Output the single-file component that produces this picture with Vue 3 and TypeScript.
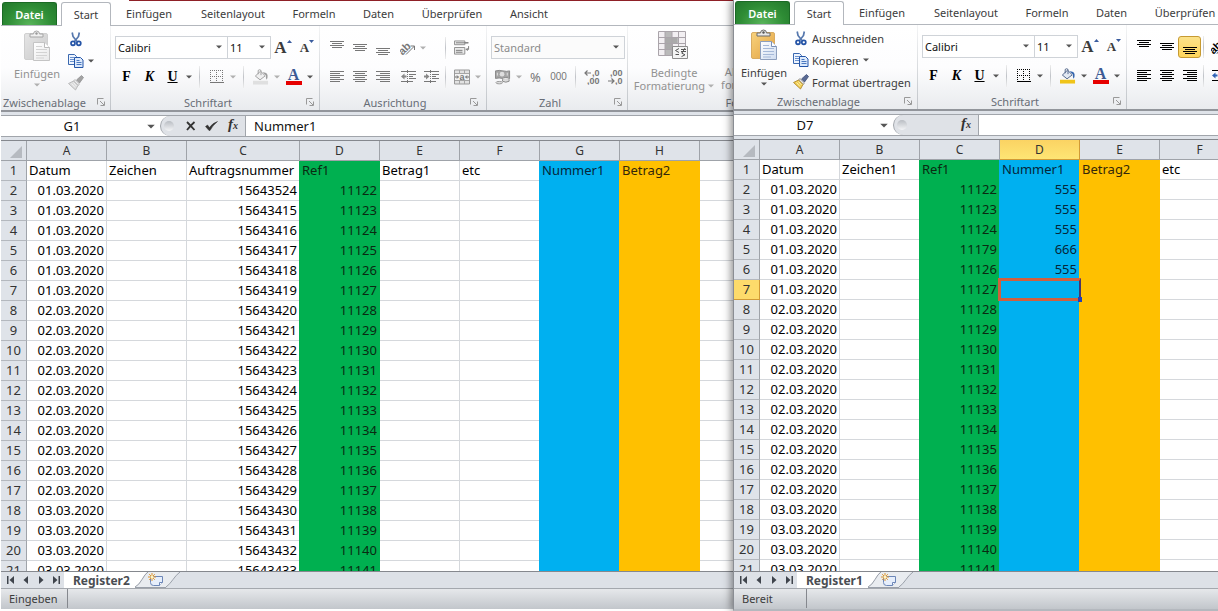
<script setup lang="ts">
interface Column {
  letter: string
  width: number
  title: string
  tone: string
}

interface Book {
  id: string
  active: boolean
  extraTabs: string[]
  cellRef: string
  formula: string
  sheet: string
  status: string
  selectedColumn: string
  selectedRow: number
  columns: Column[]
}

const col = (letter: string, title = '', tone = '', width = 80): Column => ({ letter, title, tone, width })

const books: Book[] = [
  {
    id: 'links',
    active: false,
    extraTabs: ['Ansicht'],
    cellRef: 'G1',
    formula: 'Nummer1',
    sheet: 'Register2',
    status: 'Eingeben',
    selectedColumn: '',
    selectedRow: 0,
    columns: [
      col('A', 'Datum'),
      col('B', 'Zeichen'),
      col('C', 'Auftragsnummer', '', 113),
      col('D', 'Ref1', 'green'),
      col('E', 'Betrag1'),
      col('F', 'etc'),
      col('G', 'Nummer1', 'blue'),
      col('H', 'Betrag2', 'gold'),
      col(''),
    ],
  },
  {
    id: 'rechts',
    active: true,
    extraTabs: [],
    cellRef: 'D7',
    formula: '',
    sheet: 'Register1',
    status: 'Bereit',
    selectedColumn: 'D',
    selectedRow: 7,
    columns: [
      col('A', 'Datum'),
      col('B', 'Zeichen1'),
      col('C', 'Ref1', 'green'),
      col('D', 'Nummer1', 'blue'),
      col('E', 'Betrag2', 'gold'),
      col('F', 'etc'),
    ],
  },
]

const tabs = [
  { name: 'Einfügen', size: 'w76' },
  { name: 'Seitenlayout', size: 'w92' },
  { name: 'Formeln', size: 'w70' },
  { name: 'Daten', size: 'w59' },
  { name: 'Überprüfen', size: 'w88' },
]

const rows = Array.from({ length: 20 }, (_, i) => i + 2)

function dateOf(row: number): string {
  const day = row <= 7 ? 1 : row <= 17 ? 2 : 3
  return `0${day}.03.2020`
}

function cellValue(book: Book, letter: string, row: number): string {
  if (letter === 'A') return dateOf(row)
  if (!book.active) {
    if (letter === 'C') return row === 2 ? '15643524' : String(15643412 + row)
    if (letter === 'D') return String(11120 + row)
    return ''
  }
  if (letter === 'C') return row === 5 ? '11179' : String(11120 + row)
  if (letter === 'D' && row <= 6) return row === 5 ? '666' : '555'
  return ''
}

const tableWidth = (book: Book): number => book.columns.reduce((sum, c) => sum + c.width, 26)
const aligns = ['i-top', 'i-middle', 'i-bottom']
const alignNames = ['Oben ausrichten', 'Zentriert ausrichten', 'Unten ausrichten']
const texts = ['i-left', 'i-center', 'i-right']
const textNames = ['Linksbündig', 'Zentriert', 'Rechtsbündig']
const navs = [
  { icon: 'i-first', name: 'Erstes Blatt' },
  { icon: 'i-prev', name: 'Vorheriges Blatt' },
  { icon: 'i-next', name: 'Nächstes Blatt' },
  { icon: 'i-last', name: 'Letztes Blatt' },
]
</script>

<template>
  <svg class="sprite" aria-hidden="true">
    <defs>
      <linearGradient id="g-board" x1="0" y1="0" x2="1" y2="1">
        <stop offset="0" stop-color="#f8d27c" /><stop offset="1" stop-color="#e2a243" />
      </linearGradient>
      <linearGradient id="g-page" x1="0" y1="0" x2="1" y2="1">
        <stop offset="0" stop-color="#ffffff" /><stop offset="1" stop-color="#cfdcf0" />
      </linearGradient>
    </defs>
    <symbol id="i-arrow" viewBox="0 0 6 4"><path d="M0 0.5h6L3 3.5z" fill="currentColor" /></symbol>
    <symbol id="i-paste" viewBox="0 0 28 32">
      <rect x="1.5" y="3.5" width="23" height="26" rx="1.5" fill="url(#g-board)" stroke="#d9ac62" />
      <path d="M7 7V4h3.500q0-3 3-3t3 3H20v3z" fill="#e8e8e8" stroke="#6b6b6b" />
      <circle cx="13.500" cy="3.500" r="1.200" fill="#555" />
      <path d="M10.500 12.500h11l5 5v13h-16z" fill="url(#g-page)" stroke="#8e9fbd" />
      <path d="M21.500 12.500v5h5" fill="#fff" stroke="#7a90b5" />
      <path d="M13 16.500h6M13 19.500h11M13 22.500h11M13 25.500h11M13 28h8" stroke="#a5b8d8" />
    </symbol>
    <symbol id="i-cut" viewBox="0 0 12 15">
      <path d="M2.200 0.500 3 4.500l4 5M9.300 0.500 8.500 4.500l-4 5" fill="none" stroke="#5577ad" stroke-width="1.700" />
      <circle cx="3" cy="11.300" r="2" fill="none" stroke="#2453a6" stroke-width="1.700" />
      <circle cx="8.800" cy="11.300" r="2" fill="none" stroke="#2453a6" stroke-width="1.700" />
    </symbol>
    <symbol id="i-copy" viewBox="0 0 16 14">
      <path d="M0.500 0.500h6l2 2v8h-8z" fill="#eef4fd" stroke="#3a68b0" />
      <path d="M2 3.500h4M2 5.500h4M2 7.500h4" stroke="#6b92cf" />
      <path d="M6.500 3.500h6l2.500 2.500v7.500H6.500z" fill="#dce9fb" stroke="#2455a8" />
      <path d="M8.500 6.500h3M8.500 8.500h5M8.500 10.500h5" stroke="#4c79c0" />
    </symbol>
    <symbol id="i-brush" viewBox="0 0 16 16">
      <path d="M13.500 0.500 15.500 2.500 11.500 8 8.500 5z" fill="#5a6a94" stroke="#3d4c75" stroke-width="0.800" />
      <path d="M7 4.500 11.500 9 10 10.500 5.500 6z" fill="#e5e5ea" stroke="#777" stroke-width="0.800" />
      <path d="M5.500 6 10 10.500 7.500 15 0.500 8.500z" fill="#efcb4f" stroke="#a88026" stroke-width="0.800" />
      <path d="M3.500 8.500 7 12.500M5.500 7.500 8.500 11" stroke="#fff3b4" />
    </symbol>
    <symbol id="i-launch" viewBox="0 0 8 8">
      <path d="M0.500 6.500v-6h6M3 3l4 4M7.500 3.500v4h-4" fill="none" stroke="currentColor" />
    </symbol>
    <symbol id="i-up" viewBox="0 0 5 3"><path d="M0 3h5L2.500 0z" fill="#3a5c9e" /></symbol>
    <symbol id="i-down" viewBox="0 0 5 3"><path d="M0 0h5L2.500 3z" fill="#3a5c9e" /></symbol>
    <symbol id="i-border" viewBox="0 0 14 14">
      <path d="M0 0.500h14M0 6.500h14M0.500 0v12M6.500 0v12M12.500 0v12" stroke="currentColor" stroke-dasharray="1 1" />
      <path d="M0 12.500h14" stroke="currentColor" stroke-width="1" />
    </symbol>
    <symbol id="i-fill" viewBox="0 0 17 16">
      <path d="M2.500 7 8 1.800l5 5L7.500 11z" fill="#e3e9f3" stroke="#4d6286" />
      <path d="M5.500 5V1.500q0-1.200 1.500-1.200t1.500 1.200V6" fill="none" stroke="#4d6286" />
      <path d="M10 3q5 0 5.500 3.500.3 2-1 4.500-1.200-2-.7-4.500z" fill="#3566ae" />
      <rect x="0" y="12" width="16" height="4" fill="var(--fill, #f0c419)" />
    </symbol>
    <symbol id="i-top" viewBox="0 0 14 14"><path d="M0 .5h14M2 2.500h10M0 4.500h14M2 6.500h10" stroke="currentColor" /></symbol>
    <symbol id="i-middle" viewBox="0 0 14 14"><path d="M0 3.500h14M2 5.500h10M0 7.500h14M2 9.500h10" stroke="currentColor" /></symbol>
    <symbol id="i-bottom" viewBox="0 0 14 14"><path d="M0 7.500h14M2 9.500h10M0 11.500h14M2 13.500h10" stroke="currentColor" /></symbol>
    <symbol id="i-left" viewBox="0 0 14 12"><path d="M0 .5h14M0 2.500h10M0 4.500h14M0 6.500h10M0 8.500h14M0 10.500h10" stroke="currentColor" /></symbol>
    <symbol id="i-center" viewBox="0 0 14 12"><path d="M0 .5h14M2 2.500h10M0 4.500h14M2 6.500h10M0 8.500h14M2 10.500h10" stroke="currentColor" /></symbol>
    <symbol id="i-right" viewBox="0 0 14 12"><path d="M0 .5h14M4 2.500h10M0 4.500h14M4 6.500h10M0 8.500h14M4 10.500h10" stroke="currentColor" /></symbol>
    <symbol id="i-outdent" viewBox="0 0 16 14">
      <path d="M0 1.500h15M8 4.500h7M8 6.500h4M8 8.500h7M0 11.500h12" stroke="currentColor" />
      <path d="M6.500 0v14" stroke="currentColor" stroke-dasharray="1 1" />
      <path d="M0 6.500 3.500 3.500v2h2v2h-2v2z" fill="var(--accent)" />
    </symbol>
    <symbol id="i-indent" viewBox="0 0 16 14">
      <path d="M0 1.500h15M8 4.500h7M8 6.500h4M8 8.500h7M0 11.500h12" stroke="currentColor" />
      <path d="M6.500 0v14" stroke="currentColor" stroke-dasharray="1 1" />
      <path d="M5.500 6.500 2 3.500v2H0v2h2v2z" fill="var(--accent)" />
    </symbol>
    <symbol id="i-wrap" viewBox="0 0 17 16">
      <path d="M.5.500h11v4H.5zM.5 7.500h11v7H.5z" fill="#ececec" stroke="#8d8d8d" />
      <path d="M2 2.500h13M2 10.500h7M2 12.500h7" stroke="#777" />
      <path d="M15.500 2.500h-4M15.500 6v3.500h-2.500M14.500 8 13 9.500l1.500 1.500" fill="none" stroke="#777" />
    </symbol>
    <symbol id="i-money" viewBox="0 0 17 16">
      <path d="M.5 1.500q4-1 8 0t7 0v8q-4 1-7.500 0t-7.500 0z" fill="#a5a5a5" stroke="#858585" />
      <ellipse cx="7.500" cy="5" rx="2.500" ry="2.500" fill="#dedede" />
      <path d="M2.500 3.500v3M13 3.500v3" stroke="#e4e4e4" />
      <ellipse cx="11.500" cy="10" rx="3.500" ry="1.500" fill="#e8e8e8" stroke="#888" />
      <path d="M8 10.500v2q3.500 2 7 0v-2" fill="#ddd" stroke="#888" />
      <ellipse cx="4.500" cy="14" rx="3.500" ry="1.300" fill="#ddd" stroke="#999" />
    </symbol>
    <symbol id="i-cond" viewBox="0 0 32 30">
      <path d="M.5.500h27v24H.5z" fill="#f2eff2" />
      <path d="M7 .5h7v24H7zM14 7h6v6h-6z" fill="#b9b9b9" />
      <path d="M7 7h12v6H7zM7 13h8v6H7z" fill="#aaa" />
      <path d="M.5.500h27v24H.5zM.5 6.500h27M.5 12.500h27M.5 18.500h27M7 .5v24M14 .5v24M20.500.5v24" fill="none" stroke="#aaa4aa" />
      <path d="M14.500 15.500h15v12h-15z" fill="#f4f4f4" stroke="#8c8c8c" />
      <path d="M21 17.500 17.500 19.500 21 21.500M17.500 23.500H21M23 18.500h5M23 20.500h5M27 17l-3 5M23.500 22l3.500 1.800-3.500 1.800" fill="none" stroke="#555" />
    </symbol>
    <symbol id="i-cancel" viewBox="0 0 10 10"><path d="M1 1q3 3 7.500 8M8.500 1Q5 4 1 9" fill="none" stroke="#333" stroke-width="1.800" /></symbol>
    <symbol id="i-ok" viewBox="0 0 13 10"><path d="M.5 5.500 2.500 4l2 2.500Q7.500 2 12.500.5 8 4 5 9.500H4z" fill="#333" stroke="#333" stroke-width="0.500" /></symbol>
    <symbol id="i-first" viewBox="0 0 8 8"><path d="M0 0h1.500v8H0zM7 0v8L2.500 4z" fill="currentColor" /></symbol>
    <symbol id="i-prev" viewBox="0 0 8 8"><path d="M6 0v8L1.500 4z" fill="currentColor" /></symbol>
    <symbol id="i-next" viewBox="0 0 8 8"><path d="M2 0v8l4.500-4z" fill="currentColor" /></symbol>
    <symbol id="i-last" viewBox="0 0 8 8"><path d="M1 0v8l4.500-4zM6.500 0H8v8H6.500z" fill="currentColor" /></symbol>
    <symbol id="i-newtab" viewBox="0 0 46 16">
      <path d="M0 0H12Q9 3 7 7T0 15z" fill="#fff" />
      <path d="M0 15Q4 13 7 7.500T13 0H45Q41 3 38 7.500T31 15z" fill="#e9ecf0" />
      <path d="M0 15Q4 13 7 7.500T13 0M31 15Q35 12 38 7.500T45 0M0 15.500h31" fill="none" stroke="#9aa0aa" />
      <path d="M15.500 4.500h12v6l-3 3h-6q-3 0-3-3z" fill="#e6eefb" stroke="#6d87b8" />
      <path d="M27.500 10.500h-3v3" fill="#fff" stroke="#6d87b8" />
      <path d="M17 1v8M13 5h8M14.200 2.200l5.600 5.600M19.800 2.200l-5.600 5.600" stroke="#e0952c" />
      <circle cx="17" cy="5" r="1.500" fill="#fff4c2" />
    </symbol>
  </svg>

  <main class="desktop">
    <section
      v-for="book in books"
      :key="book.id"
      class="book"
      :class="book.active ? 'is-front' : 'is-back'"
      :aria-label="book.sheet"
    >
      <nav class="tabs">
        <button class="file">Datei</button>
        <button class="tab current">Start</button>
        <button v-for="tab in tabs" :key="tab.name" class="tab" :class="tab.size">{{ tab.name }}</button>
        <button v-for="name in book.extraTabs" :key="name" class="tab w66">{{ name }}</button>
      </nav>

      <div class="ribbon">
        <div class="group clip">
          <div class="tools">
            <button class="big">
              <svg class="paste"><use href="#i-paste" /></svg>
              <span>Einfügen</span>
              <svg class="arrow"><use href="#i-arrow" /></svg>
            </button>
            <div class="stack">
              <button class="small enabled" aria-label="Ausschneiden">
                <svg class="cut"><use href="#i-cut" /></svg><span v-if="book.active">Ausschneiden</span>
              </button>
              <button class="small enabled" aria-label="Kopieren">
                <svg class="copy"><use href="#i-copy" /></svg><span v-if="book.active">Kopieren</span>
                <svg class="arrow"><use href="#i-arrow" /></svg>
              </button>
              <button class="small" aria-label="Format übertragen">
                <svg class="i16"><use href="#i-brush" /></svg><span v-if="book.active">Format übertragen</span>
              </button>
            </div>
          </div>
          <div class="caption"><span>Zwischenablage</span><button aria-label="Zwischenablage öffnen"><svg class="i8"><use href="#i-launch" /></svg></button></div>
        </div>

        <div class="group">
          <div class="tools lines">
            <div class="line">
              <span class="pick font">
                <select aria-label="Schriftart"><option>Calibri</option></select>
                <svg class="arrow"><use href="#i-arrow" /></svg>
              </span>
              <span class="pick size">
                <select aria-label="Schriftgrad"><option>11</option></select>
                <svg class="arrow"><use href="#i-arrow" /></svg>
              </span>
              <button class="grow" aria-label="Schrift vergrößern">A<svg><use href="#i-up" /></svg></button>
              <button class="grow less" aria-label="Schrift verkleinern">A<svg><use href="#i-down" /></svg></button>
            </div>
            <div class="line">
              <button class="tool serif" aria-label="Fett">F</button>
              <button class="tool serif italic" aria-label="Kursiv">K</button>
              <button class="tool serif under" aria-label="Unterstrichen">U</button>
              <button class="drop enabled" aria-label="Unterstreichung"><svg class="arrow"><use href="#i-arrow" /></svg></button>
              <i class="rule" />
              <button class="tool" aria-label="Rahmen"><svg class="i14"><use href="#i-border" /></svg></button>
              <button class="drop" aria-label="Rahmenart"><svg class="arrow"><use href="#i-arrow" /></svg></button>
              <i class="rule" />
              <button class="tool" aria-label="Füllfarbe"><svg class="i16 pale"><use href="#i-fill" /></svg></button>
              <button class="drop" aria-label="Füllfarbe wählen"><svg class="arrow"><use href="#i-arrow" /></svg></button>
              <button class="tool" aria-label="Schriftfarbe"><b class="ink">A</b></button>
              <button class="drop enabled" aria-label="Schriftfarbe wählen"><svg class="arrow"><use href="#i-arrow" /></svg></button>
            </div>
          </div>
          <div class="caption"><span>Schriftart</span><button aria-label="Schriftart öffnen"><svg class="i8"><use href="#i-launch" /></svg></button></div>
        </div>

        <div class="group align">
          <div class="tools lines">
            <div class="line">
              <button
                v-for="(icon, n) in aligns"
                :key="icon"
                class="tool"
                :class="{ pressed: book.active && n === 2 }"
                :aria-label="alignNames[n]"
              ><svg class="i14"><use :href="'#' + icon" /></svg></button>
              <i class="rule tight" />
              <button class="tool" aria-label="Ausrichtung">
                <svg class="orient" viewBox="0 0 18 16">
                  <text x="-2" y="11" class="slant" transform="rotate(-45 6 8)">ab</text>
                  <path d="M6 14.500 14.500 6M10.500 6h4v4" fill="none" stroke="currentColor" />
                </svg>
              </button>
              <button class="drop wide" aria-label="Ausrichtung wählen"><svg class="arrow"><use href="#i-arrow" /></svg></button>
              <i class="rule shown" />
              <button class="tool" aria-label="Zeilenumbruch"><svg class="i16"><use href="#i-wrap" /></svg></button>
            </div>
            <div class="line">
              <button v-for="(icon, n) in texts" :key="icon" class="tool" :aria-label="textNames[n]"><svg class="para"><use :href="'#' + icon" /></svg></button>
              <i class="rule tight" />
              <button class="tool" aria-label="Einzug verkleinern"><svg class="dent"><use href="#i-outdent" /></svg></button>
              <button class="tool" aria-label="Einzug vergrößern"><svg class="dent"><use href="#i-indent" /></svg></button>
              <i class="rule shown" />
              <button class="tool" aria-label="Verbinden und zentrieren">
                <svg class="i16" viewBox="0 0 16 15">
                  <path d="M.5.500h15v14H.5z" fill="#e2e2e2" stroke="#999" />
                  <path d="M1 4h14M1 11h14M5.500.5V4M10.500.5V4M5.500 11v3.500M10.500 11v3.500" stroke="#a5a5a5" />
                  <path d="M1 4.500h14v6H1z" fill="#f2f2f2" />
                  <path d="M1 7.500h3M3 6 4.500 7.500 3 9M15 7.500h-3M13 6l-1.500 1.500L13 9" fill="none" stroke="#666" />
                  <text x="5.500" y="10" class="glyph-a">a</text>
                </svg>
              </button>
              <button class="drop" aria-label="Verbinden wählen"><svg class="arrow"><use href="#i-arrow" /></svg></button>
            </div>
          </div>
          <div v-if="!book.active" class="caption"><span>Ausrichtung</span><button aria-label="Ausrichtung öffnen"><svg class="i8"><use href="#i-launch" /></svg></button></div>
          <div v-else class="caption" />
        </div>

        <template v-if="!book.active">
          <div class="group">
            <div class="tools lines">
              <div class="line">
                <span class="pick format">
                  <select aria-label="Zahlenformat"><option>Standard</option></select>
                  <svg class="arrow"><use href="#i-arrow" /></svg>
                </span>
              </div>
              <div class="line">
                <button class="tool" aria-label="Währung"><svg class="i16"><use href="#i-money" /></svg></button>
                <button class="drop" aria-label="Währung wählen"><svg class="arrow"><use href="#i-arrow" /></svg></button>
                <button class="tool percent">%</button>
                <button class="tool zeros">000</button>
                <i class="rule" />
                <button class="tool" aria-label="Dezimalstelle hinzufügen">
                  <svg class="i17" viewBox="0 0 17 16">
                    <path d="M1 4h6M3.500 1.500 1 4l2.500 2.500" fill="none" stroke="currentColor" stroke-width="1.200" />
                    <text x="8" y="7" class="dec">,0</text>
                    <text x="3" y="15" class="dec">,00</text>
                  </svg>
                </button>
                <button class="tool" aria-label="Dezimalstelle entfernen">
                  <svg class="i17" viewBox="0 0 17 16">
                    <text x="3" y="7" class="dec">,00</text>
                    <path d="M1 12h6M4.500 9.500 7 12l-2.500 2.500" fill="none" stroke="currentColor" stroke-width="1.200" />
                    <text x="8" y="15" class="dec">,0</text>
                  </svg>
                </button>
              </div>
            </div>
            <div class="caption"><span>Zahl</span><button aria-label="Zahl öffnen"><svg class="i8"><use href="#i-launch" /></svg></button></div>
          </div>
          <div class="group styles">
            <div class="tools">
              <button class="big cond">
                <svg class="condicon"><use href="#i-cond" /></svg>
                <span>Bedingte</span>
                <span>Formatierung <svg class="arrow"><use href="#i-arrow" /></svg></span>
              </button>
              <button class="big astable">
                <svg class="condicon" />
                <span>Als Tabelle</span>
                <span>formatieren</span>
              </button>
            </div>
            <div class="caption"><span>Formatvorlagen</span></div>
          </div>
        </template>
      </div>

      <div class="formula">
        <input class="namebox" :value="book.cellRef" aria-label="Namenfeld" />
        <button class="namedrop" aria-label="Namen anzeigen"><svg class="arrow big-arrow"><use href="#i-arrow" /></svg></button>
        <div class="pill">
          <i class="knob" />
          <button v-show="!book.active" aria-label="Abbrechen"><svg class="i10"><use href="#i-cancel" /></svg></button>
          <button v-show="!book.active" aria-label="Eingeben"><svg class="check"><use href="#i-ok" /></svg></button>
          <button class="fx" aria-label="Funktion einfügen">f<sub>x</sub></button>
        </div>
        <input class="entry" :value="book.formula" aria-label="Bearbeitungsleiste" />
      </div>

      <div class="sheet">
        <table :style="{ width: tableWidth(book) + 'px' }">
          <colgroup>
            <col class="rowhead" />
            <col v-for="c in book.columns" :key="c.letter" :style="{ width: c.width + 'px' }" />
          </colgroup>
          <thead>
            <tr>
              <th class="corner"><i /></th>
              <th v-for="c in book.columns" :key="c.letter" scope="col" :class="{ picked: c.letter !== '' && c.letter === book.selectedColumn }">{{ c.letter }}</th>
            </tr>
          </thead>
          <tbody>
            <tr>
              <th scope="row">1</th>
              <td v-for="c in book.columns" :key="c.letter" :class="c.tone">{{ c.title }}</td>
            </tr>
            <tr v-for="row in rows" :key="row">
              <th scope="row" :class="{ picked: row === book.selectedRow }">{{ row }}</th>
              <td v-for="c in book.columns" :key="c.letter" class="num" :class="c.tone">
                {{ cellValue(book, c.letter, row) }}
                <i v-if="row === book.selectedRow && c.letter === book.selectedColumn" class="cursor" />
              </td>
            </tr>
          </tbody>
        </table>
      </div>

      <div class="sheetbar">
        <div class="navs">
          <button v-for="nav in navs" :key="nav.icon" :aria-label="nav.name"><svg class="i8"><use :href="'#' + nav.icon" /></svg></button>
        </div>
        <button class="sheettab">{{ book.sheet }}</button>
        <button class="newtab" aria-label="Tabellenblatt einfügen"><svg><use href="#i-newtab" /></svg></button>
      </div>

      <footer class="status"><span>{{ book.status }}</span></footer>
    </section>
  </main>
</template>

<style>
body {
  margin: 0;
  overflow: hidden;
}
</style>

<style scoped>
.sprite {
  position: absolute;
  width: 0;
  height: 0;
}
.desktop {
  display: grid;
  grid-template-columns: 733fr 485fr;
  height: 100vh;
  font-family: "Noto Sans", "Open Sans", sans-serif;
  font-size: 11px;
  color: #3c3c3c;
}
button,
input,
select {
  font: inherit;
  color: inherit;
  margin: 0;
  padding: 0;
  border: 0;
  background: none;
  border-radius: 0;
  white-space: nowrap;
}
svg {
  display: block;
  flex: none;
}
.book {
  display: flex;
  flex-direction: column;
  min-width: 0;
  overflow: hidden;
  box-sizing: border-box;
  border-left: 1px solid #8a8d93;
  border-bottom: 2px solid #b4b8be;
  background: #fff;
  --arrow: #555;
}
.is-back {
  border-top: 1px solid #fff;
  border-image: linear-gradient(90deg, #8a8d93 0 1px, #fff 1px 130px, #8f2027 130px) 1;
  border-image-width: 1px 0 0 0;
  --ink: #777;
  --accent: #888;
  --arrow: #b0b0b0;
  --fill: #d2cfd2;
}
.is-front {
  z-index: 1;
  box-shadow: -2px 0 8px rgb(0 0 0 / 45%);
  --ink: #000;
  --accent: #2f62b5;
  --fill: #f0c419;
}

/* Ribbon tabs */
.tabs {
  display: flex;
  align-items: flex-end;
  height: 24px;
  flex: none;
  border-bottom: 1px solid #b3b7bd;
}
.file {
  width: 55px;
  height: 23px;
  flex: none;
  margin: 0 4px 0 1px;
  border: 1px solid #1b6a25;
  border-bottom: 0;
  border-radius: 3px 3px 0 0;
  background: radial-gradient(ellipse at 50% 100%, #58b45a, #2e8c35 60%, #23782c);
  color: #fff;
  font-weight: 600;
}
.tab {
  height: 24px;
  flex: none;
  text-align: center;
}
.tab.current {
  width: 50px;
  margin-bottom: -1px;
  box-sizing: border-box;
  border: 1px solid #b3b7bd;
  border-bottom: 0;
  border-radius: 3px 3px 0 0;
  background: #fff;
}
.w76 { width: 76px; }
.w92 { width: 92px; }
.w70 { width: 70px; }
.w66 { width: 66px; }
.w59 { width: 59px; }
.w88 { width: 88px; }

/* Ribbon */
.ribbon {
  display: flex;
  height: 84px;
  flex: none;
  overflow: hidden;
  background: linear-gradient(#fff, #fdfdfe 50%, #e9ebee);
  border-bottom: 2px solid #92959b;
}
.group {
  display: flex;
  flex-direction: column;
  flex: none;
  padding-left: 4px;
  border-right: 1px solid;
  border-image: linear-gradient(#f4f5f6, #bfc3c8) 1;
}
.group.clip {
  padding: 0 2px;
}
.tools {
  display: flex;
  flex: 1;
}
.lines {
  flex-direction: column;
  padding-top: 10px;
  gap: 6px;
}
.line {
  display: flex;
  align-items: center;
  height: 23px;
}
.caption {
  display: flex;
  align-items: center;
  height: 16px;
  color: #686d76;
}
.caption span {
  flex: 1;
  text-align: center;
}
.caption button {
  width: 18px;
  color: #999;
}
.clip .caption button {
  width: 14px;
}
.i8 { width: 8px; height: 8px; margin: auto; }
.i10 { width: 10px; height: 10px; }
.i14 { width: 14px; height: 14px; }
.i16 { width: 16px; height: 16px; }
.i17 { width: 17px; height: 16px; }
.para { width: 14px; height: 12px; }
.dent { width: 16px; height: 14px; }
.check { width: 13px; height: 10px; }
.orient { width: 18px; height: 16px; }
.arrow {
  width: 6px;
  height: 4px;
  color: var(--arrow);
}
.enabled .arrow,
.pick .arrow,
.namedrop .arrow {
  color: #555;
}
.big {
  display: flex;
  flex-direction: column;
  align-items: center;
  width: 58px;
  padding-top: 4px;
  margin-left: 5px;
  line-height: 13px;
}
.is-back .big {
  color: #929292;
}
.is-front .big {
  margin-left: -1px;
}
.paste {
  width: 28px;
  height: 32px;
  margin-bottom: 5px;
}
.big > .arrow {
  margin-top: 3px;
}
.is-back .paste,
.is-back .small:not(.enabled) .i16,
.is-back .pale {
  filter: grayscale(1) opacity(0.6);
}
.stack {
  padding-top: 2px;
}
.small {
  display: flex;
  align-items: center;
  gap: 3px;
  height: 22px;
  padding-left: 2px;
}
.is-front .small {
  padding-left: 0;
}
.small .arrow {
  margin-left: 1px;
}
.cut { width: 12px; height: 15px; margin: 0 2px; }
.copy { width: 16px; height: 14px; }
.is-back .clip .caption span {
  text-align: left;
}
.is-back .clip {
  width: 105px;
}
.is-front .clip {
  width: 179px;
}
.pick {
  position: relative;
  display: block;
  height: 23px;
  box-sizing: border-box;
  border: 1px solid #cfd3d8;
  background: #fff;
}
.pick select {
  width: 100%;
  height: 21px;
  padding-left: 2px;
  appearance: none;
  color: #111;
  outline: 0;
}
.pick .arrow {
  position: absolute;
  right: 5px;
  top: 8px;
  pointer-events: none;
}
.font { width: 113px; }
.size { width: 43px; border-left: 0; }
.format { width: 134px; background: #fbfbfb; }
.format select { color: #8b8b8b; }
.grow {
  display: flex;
  width: 24px;
  justify-content: center;
  font: bold 17px/23px "Liberation Serif", serif;
  color: #3b3b3b;
}
.grow svg {
  width: 5px;
  height: 3px;
  margin-top: 4px;
}
.grow.less {
  font-size: 13px;
}
.tool {
  display: flex;
  align-items: center;
  justify-content: center;
  width: 23px;
  height: 22px;
  flex: none;
  color: var(--ink);
}
.serif {
  font: bold 14px/20px "Liberation Serif", serif;
  color: #000;
}
.italic { font-style: italic; }
.under { text-decoration: underline; }
.percent { font-size: 13px; }
.zeros { font: 10px "Liberation Sans", sans-serif; }
.drop {
  display: flex;
  align-items: center;
  justify-content: center;
  width: 10px;
  height: 22px;
}
.rule {
  width: 1px;
  height: 22px;
  margin: 0 5px;
  background: linear-gradient(#eee, #c0c3c8, #eee);
}
.rule.tight {
  margin: 0 4px 0 2px;
}
.is-back .rule.tight {
  width: 0;
  margin: 0 0 0 3px;
}
.rule.shown {
  margin: 0 4px 0 2px;
}
.drop.wide {
  width: 23px;
  justify-content: flex-start;
}
.align {
  padding: 0 3px 0 5px;
}
.pressed {
  box-sizing: border-box;
  border: 1px solid #c69a32;
  border-radius: 3px;
  background: linear-gradient(#fbe28a, #ffd65c);
}
.ink {
  width: 16px;
  border-bottom: 4px solid #e60000;
  font: bold 16px/12px "Liberation Serif", serif;
  color: #3c5a94;
  text-align: center;
}
.dec,
.glyph-a,
.slant {
  font: bold 9px "Liberation Sans", sans-serif;
  fill: currentColor;
}
.slant {
  font-size: 11px;
}
.cond {
  width: 84px;
  margin-left: 0;
  padding-top: 5px;
}
.condicon {
  width: 32px;
  height: 30px;
  margin-bottom: 5px;
}
.cond span,
.astable span {
  display: flex;
  align-items: center;
  gap: 3px;
}
.astable {
  width: 68px;
  margin-left: 2px;
}
.styles .caption {
  width: 270px;
}

/* Formula bar */
.formula {
  display: flex;
  height: 20px;
  flex: none;
  margin-top: 3px;
  border-top: 1px solid #a1a5ab;
  border-bottom: 1px solid #a1a5ab;
  box-shadow: 0 -3px 0 #dfe3e9;
  font-size: 12px;
  color: #111;
}
.namebox {
  width: 142px;
  text-align: center;
}
.namedrop {
  width: 17px;
  padding-left: 4px;
}
.big-arrow {
  width: 8px;
  height: 5px;
}
.pill {
  display: flex;
  align-items: center;
  justify-content: flex-end;
  width: 84px;
  border: solid #a1a5ab;
  border-width: 0 1px;
  border-radius: 10px 0 0 10px;
  background: #dfe2e7;
}
.pill button {
  width: 20px;
  display: flex;
  justify-content: center;
}
.knob {
  width: 10px;
  height: 10px;
  margin: 0 auto 0 3px;
  border-radius: 50%;
  background: linear-gradient(#b9bdc3, #f4f5f7);
}
.pill .fx {
  width: 24px;
  font: italic bold 15px/18px "Liberation Serif", serif;
  color: #333;
}
.fx sub {
  font-size: 10px;
  line-height: 22px;
  vertical-align: baseline;
}
.entry {
  flex: 1;
  min-width: 0;
  padding-left: 8px;
}
.namebox,
.entry {
  outline: 0;
  background: #fff;
  font-size: 13px;
}

/* Grid */
.sheet {
  flex: 1;
  min-height: 0;
  margin-top: 3px;
  overflow: hidden;
  border-top: 1px solid #85888e;
  box-shadow: 0 -3px 0 #dfe3e9;
}
table {
  table-layout: fixed;
  border-collapse: separate;
  border-spacing: 0;
  font-size: 13px;
  color: #000;
}
.rowhead {
  width: 26px;
}
tr {
  height: 20px;
}
th,
td {
  box-sizing: border-box;
  height: 20px;
  padding: 0 2px;
  border: solid #d5d8dc;
  border-width: 0 1px 1px 0;
  line-height: 19px;
  white-space: nowrap;
  font-weight: 400;
  text-align: left;
}
th {
  padding: 0;
  border-color: #9fa3a9;
  background: #dfe3e9;
  color: #333;
  text-align: center;
}
thead th {
  font-size: 12px;
}
tbody th {
  border-bottom-color: #b4b8be;
}
thead th.picked {
  background: linear-gradient(#fbd363, #fee574);
  border-color: #d19a35;
}
tbody th.picked {
  background: #fddb6b;
  border-color: #d19a35;
}
.corner i {
  display: block;
  width: 12px;
  height: 12px;
  margin: 3px 4px 0 auto;
  background: #b6bac0;
  clip-path: polygon(100% 0, 100% 100%, 0 100%);
}
.num {
  position: relative;
  text-align: right;
}
.green { background: #00b050; border-color: #00b050; box-shadow: -1px 0 #00b050; color: #0a2a12; }
.blue { background: #00b0f0; border-color: #00b0f0; box-shadow: -1px 0 #00b0f0; color: #06263a; }
.gold { background: #ffc000; border-color: #ffc000; box-shadow: -1px 0 #ffc000; color: #33270a; }
.cursor {
  position: absolute;
  z-index: 1;
  inset: -2px -2px -2px -2px;
  border: 3px solid #d0603e;
  border-right: 2px solid #4a3568;
}
.cursor::after {
  content: "";
  position: absolute;
  right: -3px;
  bottom: -4px;
  width: 4px;
  height: 5px;
  background: #2040b8;
}

/* Sheet tabs and status */
.sheetbar {
  display: flex;
  height: 16px;
  flex: none;
  border-top: 1px solid #85888e;
  background: #dde1e7;
}
.navs {
  display: flex;
  width: 63px;
  color: #3f444c;
}
.navs button {
  width: 15px;
}
.navs button:first-child {
  margin-left: 2px;
}
.sheettab {
  padding: 0 5px 0 9px;
  background: #fff;
  font-size: 12px;
  font-weight: 700;
  line-height: 15px;
  color: #4a4d52;
}
.newtab svg {
  width: 46px;
  height: 16px;
}
.status {
  height: 20px;
  flex: none;
  border-top: 1px solid #a4a8ae;
  background: linear-gradient(#e6e8eb, #c2c6cb);
}
.status span {
  display: block;
  box-sizing: border-box;
  width: 67px;
  padding-left: 8px;
  border-right: 1px solid #85888e;
  line-height: 19px;
}
.is-front .status span {
  width: 73px;
}
</style>
